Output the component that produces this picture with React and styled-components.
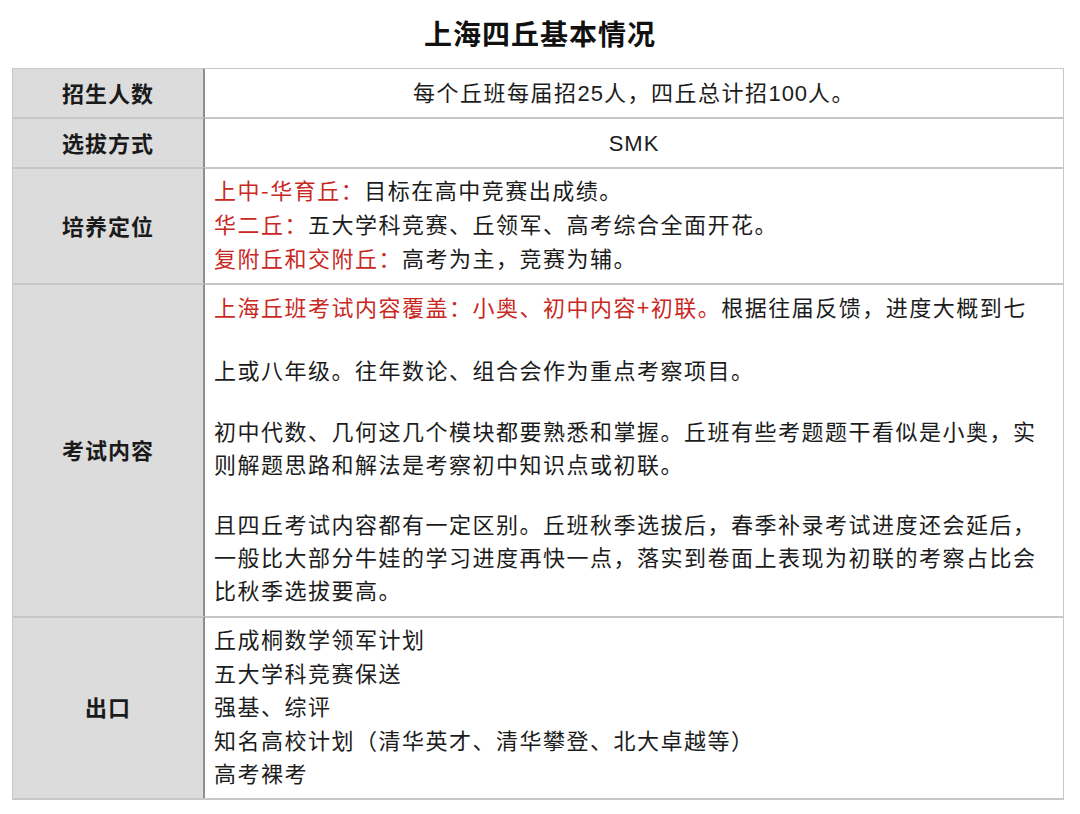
import React from "react";
import styled, { createGlobalStyle } from "styled-components";

const Global = createGlobalStyle`
  html, body { margin: 0; padding: 0; background: #fff; }
  body { font-family: "Noto Sans CJK SC", "Noto Sans", sans-serif; color: #1c1c1c; }
`;

const Page = styled.div`
  width: 1080px;
  height: 814px;
  box-sizing: border-box;
  padding: 0 16px 0 12px;
  background: #fff;
`;

const Title = styled.h1`
  margin: 0;
  height: 68px;
  line-height: 66px;
  text-align: center;
  font-size: 28px;
  font-weight: 700;
  letter-spacing: 1px;
  color: #111;
  padding-left: 4px;
`;

const Table = styled.div`
  display: grid;
  grid-template-columns: 192px 1fr;
  border: 1px solid #c8c8c8;
  border-bottom-width: 2px;
`;

const Label = styled.div`
  background: #dcdcdc;
  border-right: 2px solid #8e8e8e;
  border-top: ${(p) => (p.$first ? "none" : "2px solid #c6c6c6")};
  display: flex;
  align-items: center;
  justify-content: center;
  padding-bottom: 3px;
  font-size: 22px;
  font-weight: 700;
  letter-spacing: 1px;
  color: #1a1a1a;
  overflow: hidden;
`;

const Cell = styled.div`
  border-top: ${(p) => (p.$first ? "none" : "2px solid #c6c6c6")};
  font-size: 22px;
  letter-spacing: 1.5px;
  line-height: ${(p) => p.$lh || 33}px;
  padding: ${(p) => p.$pad || "0 9px"};
  text-align: ${(p) => (p.$center ? "center" : "left")};
  height: ${(p) => (p.$h ? `${p.$h}px` : "auto")};
  box-sizing: border-box;
  display: flex;
  flex-direction: column;
  justify-content: center;
  overflow: hidden;
`;

const Line = styled.div`
  margin-top: ${(p) => p.$mt || 0}px;
`;

const Red = styled.span`
  color: #c9281f;
`;

const Sans = styled.span`
  font-family: "Liberation Sans", "Noto Sans CJK SC", sans-serif;
  letter-spacing: 1px;
  line-height: 1;
`;

export default function App() {
  return (
    <Page>
      <Global />
      <Title>上海四丘基本情况</Title>
      <Table>
        <Label $first>招生人数</Label>
        <Cell $first $center $h={48} $lh={44} $pad="0 9px 4px">
          <Line>
            每个丘班每届招<Sans>25</Sans>人，四丘总计招<Sans>100</Sans>人。
          </Line>
        </Cell>

        <Label>选拔方式</Label>
        <Cell $center $h={50} $lh={44} $pad="0 9px 4px">
          <Line>
            <Sans>SMK</Sans>
          </Line>
        </Cell>

        <Label>培养定位</Label>
        <Cell $lh={34} $pad="3px 9px 9px">
          <Line>
            <Red>上中-华育丘：</Red>目标在高中竞赛出成绩。
          </Line>
          <Line>
            <Red>华二丘：</Red>五大学科竞赛、丘领军、高考综合全面开花。
          </Line>
          <Line>
            <Red>复附丘和交附丘：</Red>高考为主，竞赛为辅。
          </Line>
        </Cell>

        <Label>考试内容</Label>
        <Cell $lh={33} $pad="5px 9px 10px">
          <Line>
            <Red>上海丘班考试内容覆盖：小奥、初中内容+初联。</Red>根据往届反馈，进度大概到七
          </Line>
          <Line $mt={30}>上或八年级。往年数论、组合会作为重点考察项目。</Line>
          <Line $mt={28}>初中代数、几何这几个模块都要熟悉和掌握。丘班有些考题题干看似是小奥，实</Line>
          <Line>则解题思路和解法是考察初中知识点或初联。</Line>
          <Line $mt={27}>且四丘考试内容都有一定区别。丘班秋季选拔后，春季补录考试进度还会延后，</Line>
          <Line>一般比大部分牛娃的学习进度再快一点，落实到卷面上表现为初联的考察占比会</Line>
          <Line>比秋季选拔要高。</Line>
        </Cell>

        <Label>出口</Label>
        <Cell $lh={33.5} $pad="4px 9px 8px">
          <Line>丘成桐数学领军计划</Line>
          <Line>五大学科竞赛保送</Line>
          <Line>强基、综评</Line>
          <Line>知名高校计划（清华英才、清华攀登、北大卓越等）</Line>
          <Line>高考裸考</Line>
        </Cell>
      </Table>
    </Page>
  );
}
